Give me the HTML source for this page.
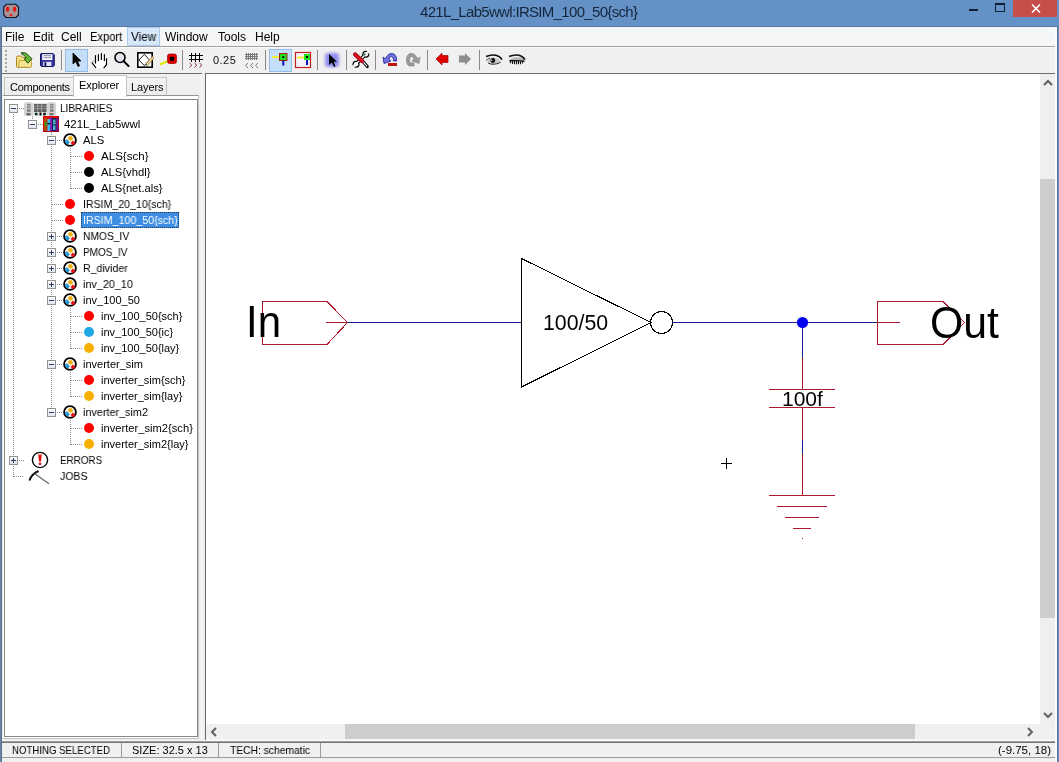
<!DOCTYPE html>
<html><head><meta charset="utf-8"><style>
*{margin:0;padding:0;box-sizing:border-box}
html,body{width:1059px;height:762px;overflow:hidden;position:relative;background:#f0f0f0;font-family:"Liberation Sans",sans-serif;}
.a{position:absolute}
.t{position:absolute;white-space:nowrap;line-height:16px;font-size:11px;color:#000;will-change:transform}
svg{position:absolute;overflow:visible}
</style></head><body>
<div class="a" style="left:0;top:0;width:1059px;height:27px;background:#6592c6;border-bottom:1px solid #5a7aa2"></div>
<div class="a" style="left:0;top:27px;width:1px;height:735px;background:#6a86a6"></div>
<div class="a" style="left:1px;top:27px;width:1px;height:735px;background:#56708e"></div>
<div class="a" style="left:1055px;top:27px;width:2px;height:735px;background:#f8fbff"></div>
<div class="a" style="left:1057px;top:27px;width:1px;height:735px;background:#56769a"></div>
<div class="a" style="left:1058px;top:27px;width:1px;height:735px;background:#6a8db5"></div>
<svg style="left:3px;top:3px" width="17" height="16" viewBox="0 0 17 16">
<path d="M3.3,1.3 H12.7 L15.5,4 V11.8 L12.7,14.5 H3.3 L0.7,11.8 V4 Z" fill="#a89494" stroke="#10101e" stroke-width="1.1" stroke-linejoin="round"/>
<ellipse cx="4.6" cy="6.2" rx="1.6" ry="2.6" fill="#ee1010"/><ellipse cx="11.6" cy="6.2" rx="1.6" ry="2.6" fill="#ee1010"/>
<path d="M6,12.8 Q8,8.8 10,12.8 Z" fill="#ee1010"/></svg>
<div class="t" style="left:420px;top:3px;font-size:15px;line-height:18px;color:#15253a;letter-spacing:-0.68px;transform:scaleY(1.03);transform-origin:0 13.5px">421L_Lab5wwl:IRSIM_100_50{sch}</div>
<div class="a" style="left:969px;top:9px;width:9px;height:2px;background:#0e1e36"></div>
<div class="a" style="left:995px;top:3px;width:10px;height:9px;border:1px solid #0e1e36;border-top-width:2px"></div>
<div class="a" style="left:1013px;top:0;width:44px;height:17px;background:#c74f4a"></div>
<svg style="left:1031px;top:4px" width="10" height="9" viewBox="0 0 10 9"><path d="M1,0.5 L9,8.5 M9,0.5 L1,8.5" stroke="#fff" stroke-width="1.6"/></svg>
<div class="a" style="left:2px;top:27px;width:1053px;height:19px;background:#f5f6f7"></div>
<div class="a" style="left:2px;top:46px;width:1053px;height:1px;background:#a0a0a0"></div>
<div class="a" style="left:127px;top:27px;width:33px;height:19px;background:#d5e7f8;border:1px solid #a8cbef"></div>
<div class="t" style="left:5.4px;top:29px;font-size:12px;line-height:16px">File</div>
<div class="t" style="left:32.5px;top:29px;font-size:12px;line-height:16px">Edit</div>
<div class="t" style="left:61.0px;top:29px;font-size:12px;line-height:16px">Cell</div>
<div class="t" style="left:90.0px;top:29px;font-size:12px;line-height:16px;transform:scaleX(0.93);transform-origin:0 0">Export</div>
<div class="t" style="left:130.5px;top:29px;font-size:12px;line-height:16px;transform:scaleX(0.97);transform-origin:0 0">View</div>
<div class="t" style="left:165.0px;top:29px;font-size:12px;line-height:16px">Window</div>
<div class="t" style="left:217.5px;top:29px;font-size:12px;line-height:16px">Tools</div>
<div class="t" style="left:254.5px;top:29px;font-size:12px;line-height:16px">Help</div>
<div class="a" style="left:2px;top:47px;width:1053px;height:26px;background:#f0f0f0"></div>
<div class="a" style="left:2px;top:47px;width:1053px;height:1px;background:#fafafa"></div>
<div class="a" style="left:2px;top:73px;width:200px;height:1px;background:#6e6e6e"></div>
<div class="a" style="left:205px;top:73px;width:850px;height:1px;background:#6e6e6e"></div>
<div class="a" style="left:5px;top:50px;width:2px;height:2px;background:#a8a8a8"></div>
<div class="a" style="left:5px;top:54px;width:2px;height:2px;background:#a8a8a8"></div>
<div class="a" style="left:5px;top:58px;width:2px;height:2px;background:#a8a8a8"></div>
<div class="a" style="left:5px;top:62px;width:2px;height:2px;background:#a8a8a8"></div>
<div class="a" style="left:5px;top:66px;width:2px;height:2px;background:#a8a8a8"></div>
<div class="a" style="left:5px;top:70px;width:2px;height:2px;background:#a8a8a8"></div>
<div class="a" style="left:61px;top:50px;width:1px;height:20px;background:#8a8a8a"></div>
<div class="a" style="left:182px;top:50px;width:1px;height:20px;background:#8a8a8a"></div>
<div class="a" style="left:265px;top:50px;width:1px;height:20px;background:#8a8a8a"></div>
<div class="a" style="left:317px;top:50px;width:1px;height:20px;background:#8a8a8a"></div>
<div class="a" style="left:346px;top:50px;width:1px;height:20px;background:#8a8a8a"></div>
<div class="a" style="left:375px;top:50px;width:1px;height:20px;background:#8a8a8a"></div>
<div class="a" style="left:427px;top:50px;width:1px;height:20px;background:#8a8a8a"></div>
<div class="a" style="left:479px;top:50px;width:1px;height:20px;background:#8a8a8a"></div>
<div class="a" style="left:65px;top:49px;width:23px;height:23px;background:#c5defa;border:1px solid #94bde8"></div>
<div class="a" style="left:269px;top:49px;width:23px;height:23px;background:#c5defa;border:1px solid #94bde8"></div>
<svg style="left:13px;top:49px" width="22" height="22" viewBox="0 0 22 22">
<path d="M3.5,8.5 Q3.5,7 5,7 H8.5 L10,8.5 H16.5 Q18,8.5 18,10 V17.5 Q18,18.5 17,18.5 H4.5 Q3.5,18.5 3.5,17.5 Z" fill="#f3dc80" stroke="#a88a2a" stroke-width="1"/>
<path d="M6.3,11.5 H17.5 Q18.5,11.5 18.5,12.5 V17.5 Q18.5,18.3 17.5,18.3 H5.5 Q6,14 6.3,11.5 Z" fill="#f7e490" stroke="#b89a30" stroke-width="0.8"/>
<path d="M8.5,3.6 Q13,3 15.5,6.3 L19,9.8 L14.8,14.2 L11.2,10 L13.3,9 Q11.8,6 8.7,5 Z" fill="#64b834" stroke="#17400e" stroke-width="0.9" stroke-linejoin="round"/>
</svg>
<svg style="left:40px;top:53px" width="15" height="14" viewBox="0 0 15 14">
<path d="M1,0.5 H13 L14.3,1.8 V12.5 L13.3,13.5 H1.5 L0.5,12.5 V1 Z" fill="#3030a0" stroke="#16165a" stroke-width="1"/>
<rect x="2.2" y="1.2" width="10.2" height="5.8" fill="#fff"/>
<rect x="3.5" y="2.4" width="7.5" height="0.8" fill="#5a5a8a"/><rect x="3.5" y="4.4" width="7.5" height="0.8" fill="#6a6a9a"/>
<rect x="3.2" y="8.8" width="8.2" height="4.2" fill="#e2e2f8"/><rect x="4.5" y="9.2" width="1.8" height="3.8" fill="#141450"/>
</svg>
<svg style="left:72px;top:52px" width="10" height="16" viewBox="0 0 10 16">
<path d="M1,1 L1,12 L3.8,9.5 L6,14.5 L7.5,13.8 L5.5,9 L9,9 Z" fill="#000" stroke="#000" stroke-width="0.8" stroke-linejoin="round"/>
</svg>
<svg style="left:88px;top:50px" width="22" height="20" viewBox="0 0 22 20">
<path d="M4,13 L7.5,11.5 V5 Q10,3.5 13.5,3.5 Q17,4 18.5,7 V14 L16,18 H8 Z" fill="#fff"/>
<path d="M7.5,5.5 V13.1 M10.4,4.5 V10.5 M13.4,3.7 V9.4 M16.4,4.7 V10.5 M18.5,8.7 V14.7 L16,17.6 M4.2,12.9 L7.7,17.5" fill="none" stroke="#000" stroke-width="1.2" stroke-linecap="round"/>
<path d="M3.3,12.3 L7,11" stroke="#999" stroke-width="0.8"/>
</svg>
<svg style="left:113px;top:51px" width="17" height="17" viewBox="0 0 17 17">
<circle cx="7" cy="6.5" r="5" fill="#e4e4ee" stroke="#000" stroke-width="1.6"/>
<path d="M10.5,10 L15.5,15" stroke="#000" stroke-width="2" stroke-linecap="round"/>
</svg>
<svg style="left:137px;top:52px" width="18" height="16" viewBox="0 0 18 16">
<rect x="0.8" y="0.8" width="14.4" height="14.4" fill="#fff" stroke="#000" stroke-width="1.6"/>
<path d="M2,8 L7.3,2.3 L12.5,8 L7.3,13.6 Z" fill="none" stroke="#000" stroke-width="0.9"/>
<path d="M9,12 L15.5,4.5 L17,6 L10.5,13.5 Z" fill="#e8cf90" stroke="#a08048" stroke-width="0.6"/>
<path d="M8.5,13.5 L9,12 L10.5,13.5 Z" fill="#333"/>
</svg>
<svg style="left:159px;top:53px" width="19" height="14" viewBox="0 0 19 14">
<path d="M1,11.5 L10,7.5" stroke="#e6e600" stroke-width="2"/>
<rect x="8.5" y="1" width="9" height="9.5" rx="2" fill="#e00000" stroke="#a00000" stroke-width="0.7"/>
<circle cx="13" cy="5.8" r="2.4" fill="#000"/>
</svg>
<svg style="left:188px;top:52px" width="16" height="17" viewBox="0 0 16 17">
<path d="M3.5,1 V10 M7.5,1 V10 M11.5,1 V10 M1,3.5 H14.5 M1,7.5 H14.5" stroke="#000" stroke-width="1" shape-rendering="crispEdges"/>
<path d="M1.5,11 L3.8,13.2 L1.5,15.4 M6.5,11 L8.8,13.2 L6.5,15.4 M11.5,11 L13.8,13.2 L11.5,15.4" fill="none" stroke="#8c2424" stroke-width="1"/>
</svg>
<div class="t" style="left:212.5px;top:52px;font-size:11px;line-height:16px;color:#111;letter-spacing:0.45px">0.25</div>
<svg style="left:244px;top:52px" width="16" height="17" viewBox="0 0 16 17">
<path d="M2.5,1 V8 M4.5,1 V8 M6.5,1 V8 M8.5,1 V8 M10.5,1 V8 M12.5,1 V8 M1,2.5 H14 M1,4.5 H14 M1,6.5 H14" stroke="#7a7a7a" stroke-width="1" shape-rendering="crispEdges"/>
<path d="M4,11 L1.5,13.5 L4,16 M9,11 L6.5,13.5 L9,16 M14,11 L11.5,13.5 L14,16" fill="none" stroke="#707070" stroke-width="0.9"/>
</svg>
<svg style="left:271px;top:52px" width="18" height="15" viewBox="0 0 18 15">
<rect x="1" y="4" width="8" height="2" fill="#f0f030"/>
<rect x="8.5" y="1.5" width="7.5" height="7" fill="#20e020" stroke="#a02010" stroke-width="1"/>
<rect x="11.3" y="4.2" width="2" height="1.8" fill="#000"/>
<rect x="11.3" y="8.5" width="2" height="5" fill="#1010c0"/>
</svg>
<svg style="left:294px;top:51px" width="18" height="18" viewBox="0 0 18 18">
<rect x="1.5" y="1.5" width="15" height="15" fill="#f4f4ff" stroke="#c02020" stroke-width="1.2"/>
<rect x="3" y="5.5" width="7" height="2" fill="#f0f030"/>
<rect x="10" y="3" width="6" height="6" fill="#20e020"/>
<rect x="12" y="5" width="2" height="2" fill="#000"/>
<rect x="12" y="9" width="2" height="5" fill="#1010c0"/>
</svg>
<div class="a" style="left:325px;top:53px;width:14px;height:14px;border-radius:3px;background:#8f8ff0;filter:blur(1.6px)"></div>
<svg style="left:323px;top:51px" width="18" height="18" viewBox="0 0 18 18">
<path d="M6,3 L6,14 L8.8,11.5 L11,16 L12.5,15.3 L10.5,10.8 L14,10.8 Z" fill="#000"/>
</svg>
<svg style="left:350px;top:49px" width="22" height="21" viewBox="0 0 22 21">
<path d="M6.5,14.5 L15,6" stroke="#000" stroke-width="3.4" stroke-linecap="round"/>
<circle cx="15.8" cy="5.3" r="3.5" fill="#000"/><circle cx="6" cy="15.2" r="3.5" fill="#000"/>
<path d="M6.5,14.5 L15,6" stroke="#fff" stroke-width="1.4"/>
<circle cx="15.8" cy="5.3" r="2.3" fill="#fff"/><circle cx="6" cy="15.2" r="2.3" fill="#fff"/>
<path d="M15.8,5.3 L19.5,1.6" stroke="#f0f0f0" stroke-width="2.6"/><path d="M6,15.2 L2.3,18.9" stroke="#f0f0f0" stroke-width="2.6"/>
<circle cx="14.6" cy="5.6" r="1" fill="#1a5a4a"/>
<path d="M12.5,12 L17.3,17.6" stroke="#000" stroke-width="3" stroke-linecap="round"/>
<path d="M13,12.6 L16.8,17" stroke="#fff" stroke-width="1.1" stroke-linecap="round"/>
<path d="M5.2,5.5 L12,12" stroke="#a00010" stroke-width="4.4" stroke-linecap="round"/>
<path d="M5.2,5.5 L12,12" stroke="#dd1020" stroke-width="2.6" stroke-linecap="round"/>
</svg>
<svg style="left:382px;top:52px" width="16" height="16" viewBox="0 0 16 16">
<path d="M4,6 Q6,1 10.5,1.5 Q15,2.5 14.5,9 L11.5,9 Q12,5 9.5,4.5 Q7.5,4.5 7,7.5 L9,9 L2,11.5 L1,5 L3,6.5 Z" fill="#7070e0" stroke="#1c1c96" stroke-width="0.8"/>
<rect x="6" y="11" width="9" height="3" fill="#c01010"/>
</svg>
<svg style="left:405px;top:52px" width="16" height="16" viewBox="0 0 16 16">
<path d="M12,6 Q10,1 5.5,1.5 Q1,2.5 1.5,9 Q2,14.5 6,14 L9,14 L9,11 L6,11 Q4.5,11 4.5,8 Q4.5,4.5 6.5,4.5 Q8.5,4.5 9,7.5 L7,9 L14,11.5 L15,5 L13,6.5 Z" fill="#9a9a9a" stroke="#8a8a8a" stroke-width="0.8"/>
</svg>
<svg style="left:435px;top:52px" width="14" height="14" viewBox="0 0 14 14">
<path d="M1,7 L7,1 V3.5 H13 V10.5 H7 V13 Z" fill="#e00000" stroke="#a00000" stroke-width="0.7"/>
</svg>
<svg style="left:458px;top:52px" width="14" height="14" viewBox="0 0 14 14">
<path d="M13,7 L7,1 V3.5 H1 V10.5 H7 V13 Z" fill="#8e8e8e"/>
</svg>
<svg style="left:483px;top:51px" width="22" height="16" viewBox="0 0 22 16">
<path d="M3.5,9 Q7,5.8 12,6.6 Q16,7.5 18,10.5 Q13,14 7.5,13.5 Q4.5,12.3 3.5,9 Z" fill="#c8c8c8"/>
<path d="M5,12 Q10,14.8 17.5,11.5" fill="none" stroke="#333" stroke-width="1"/>
<path d="M3.2,9.2 Q5,7.5 7,7" fill="none" stroke="#444" stroke-width="0.9"/>
<circle cx="9.8" cy="9.5" r="2.4" fill="#0a0a0a"/><circle cx="8.6" cy="9.3" r="0.7" fill="#fff"/>
<path d="M3,5.6 Q8,3.3 13,4.3 Q17,5.2 19,8.6" fill="none" stroke="#111" stroke-width="1.6"/>
</svg>
<svg style="left:506px;top:51px" width="22" height="16" viewBox="0 0 22 16">
<path d="M3.5,8.5 Q9,5.2 17,7 L18.5,10 Q11,9.6 3.5,9.8 Z" fill="#b4b4b4"/>
<path d="M3.5,9.8 Q11,9.3 18.5,10.2" fill="none" stroke="#111" stroke-width="1.4"/>
<path d="M4.5,10 v2.3 M6.5,10 v3 M8.5,10 v3.2 M10.5,10 v3.2 M12.5,10 v3.2 M14.5,10.2 v3 M16.5,10.3 v2.3" stroke="#111" stroke-width="1.1"/>
<path d="M3,5.6 Q8,3.3 13,4.3 Q17,5.2 19,8.6" fill="none" stroke="#111" stroke-width="1.6"/>
</svg>
<div class="a" style="left:4px;top:77px;width:70px;height:18px;background:linear-gradient(#f4f4f4,#ececec);border:1px solid #c4c4c4;border-bottom:none"></div>
<div class="a" style="left:126px;top:77px;width:41px;height:18px;background:linear-gradient(#f4f4f4,#ececec);border:1px solid #c4c4c4;border-bottom:none"></div>
<div class="a" style="left:3px;top:95px;width:196px;height:644px;border:1px solid #c4c4c4;border-top-color:#959595;border-left:none;background:#fff"></div>
<div class="a" style="left:73px;top:75px;width:54px;height:22px;background:#fff;border:1px solid #c4c4c4;border-bottom:none"></div>
<div class="t" style="left:10px;top:79px;font-size:11px;line-height:16px;letter-spacing:-0.25px">Components</div>
<div class="t" style="left:79px;top:77px;font-size:11px;line-height:16px;letter-spacing:-0.1px">Explorer</div>
<div class="t" style="left:131px;top:79px;font-size:11px;line-height:16px;letter-spacing:-0.1px">Layers</div>
<div class="a" style="left:4px;top:99px;width:194px;height:638px;border:1px solid #888;background:#fff"></div>
<div class="a" style="left:13px;top:112px;width:1px;height:365px;background:repeating-linear-gradient(180deg,#8a8a8a 0 1px,transparent 1px 2px)"></div>
<div class="a" style="left:32px;top:116px;width:1px;height:4px;background:repeating-linear-gradient(180deg,#8a8a8a 0 1px,transparent 1px 2px)"></div>
<div class="a" style="left:51px;top:132px;width:1px;height:281px;background:repeating-linear-gradient(180deg,#8a8a8a 0 1px,transparent 1px 2px)"></div>
<div class="a" style="left:70px;top:148px;width:1px;height:41px;background:repeating-linear-gradient(180deg,#8a8a8a 0 1px,transparent 1px 2px)"></div>
<div class="a" style="left:70px;top:308px;width:1px;height:41px;background:repeating-linear-gradient(180deg,#8a8a8a 0 1px,transparent 1px 2px)"></div>
<div class="a" style="left:70px;top:372px;width:1px;height:25px;background:repeating-linear-gradient(180deg,#8a8a8a 0 1px,transparent 1px 2px)"></div>
<div class="a" style="left:70px;top:420px;width:1px;height:25px;background:repeating-linear-gradient(180deg,#8a8a8a 0 1px,transparent 1px 2px)"></div>
<div class="a" style="left:9px;top:104px;width:9px;height:9px;border:1px solid #919191;background:linear-gradient(#fff,#e0e4ee)"></div>
<div class="a" style="left:11px;top:108px;width:5px;height:1px;background:#2c3c5c"></div>
<div class="a" style="left:19px;top:108px;width:5px;height:1px;background:repeating-linear-gradient(90deg,#8a8a8a 0 1px,transparent 1px 2px)"></div>
<svg style="left:24px;top:100px" width="32" height="16" viewBox="0 0 32 16">
<path d="M0,3.5 Q4.5,0 9,3.5 V15.5 H0 Z" fill="#d4d4d4"/>
<path d="M23,3.5 Q27.5,0 32,3.5 V15.5 H23 Z" fill="#d4d4d4"/>
<rect x="9" y="3" width="14" height="12.5" fill="#e2e2e2"/>
<rect x="3" y="4" width="3.5" height="8" fill="#8a8a8a"/><rect x="26" y="4" width="3.5" height="8" fill="#8a8a8a"/>
<path d="M3,6 H6.5 M3,8.5 H6.5 M26,6 H29.5 M26,8.5 H29.5" stroke="#d4d4d4" stroke-width="0.7"/>
<rect x="10" y="4" width="12.5" height="8" fill="#5a5a5a"/>
<path d="M10,6.2 H22.5 M10,8.8 H22.5 M13.8,4 V12 M17.6,4 V12" stroke="#b0b0b0" stroke-width="0.8"/>
<rect x="2.5" y="13" width="4" height="2.5" fill="#666"/><rect x="25.5" y="13" width="4" height="2.5" fill="#777"/>
<circle cx="12.2" cy="14" r="1.5" fill="#103030"/><rect x="15.5" y="12.5" width="2" height="3" fill="#000"/><circle cx="20.5" cy="14" r="1.5" fill="#111"/>
</svg>
<div class="t" style="left:60px;top:100px;transform:scaleX(0.9100);transform-origin:0 0">LIBRARIES</div>
<div class="a" style="left:28px;top:120px;width:9px;height:9px;border:1px solid #919191;background:linear-gradient(#fff,#e0e4ee)"></div>
<div class="a" style="left:30px;top:124px;width:5px;height:1px;background:#2c3c5c"></div>
<div class="a" style="left:38px;top:124px;width:5px;height:1px;background:repeating-linear-gradient(90deg,#8a8a8a 0 1px,transparent 1px 2px)"></div>
<svg style="left:43px;top:116px" width="16" height="16" viewBox="0 0 16 16">
<rect x="0" y="0" width="16" height="16" fill="#e00808"/>
<rect x="15" y="0" width="1" height="16" fill="#a00030"/><rect x="0" y="15" width="16" height="1" fill="#b00020"/>
<rect x="1" y="2" width="3.5" height="13" fill="#b04808"/><rect x="1.5" y="6.5" width="2.5" height="3" fill="#30a020"/>
<rect x="4.5" y="3" width="2.5" height="12" fill="#40c0f0"/><rect x="4.5" y="7" width="2.5" height="1.3" fill="#000"/>
<rect x="7" y="1.5" width="2" height="13.5" fill="#8020b0"/>
<rect x="9" y="2" width="4.5" height="13" fill="#101a60"/><rect x="10" y="3.5" width="2.5" height="5" fill="#50b0b8"/><rect x="10" y="9.5" width="2.5" height="4.5" fill="#50b0c8"/>
<rect x="13.5" y="2" width="1.5" height="13" fill="#6020a0"/>
</svg>
<div class="t" style="left:63.6px;top:116px;transform:scaleX(1.0410);transform-origin:0 0">421L_Lab5wwl</div>
<div class="a" style="left:47px;top:136px;width:9px;height:9px;border:1px solid #919191;background:linear-gradient(#fff,#e0e4ee)"></div>
<div class="a" style="left:49px;top:140px;width:5px;height:1px;background:#2c3c5c"></div>
<div class="a" style="left:57px;top:140px;width:6px;height:1px;background:repeating-linear-gradient(90deg,#8a8a8a 0 1px,transparent 1px 2px)"></div>
<svg style="left:63px;top:133px" width="14" height="14" viewBox="0 0 14 14">
<circle cx="7" cy="7" r="5.9" fill="#fff" stroke="#000" stroke-width="1.9"/>
<path d="M7.5,2.3 L10.6,5.2 L7.5,8.3 L4.4,5.2 Z" fill="#f2b21a"/>
<path d="M4,6.3 L7,9.3 L4.6,11.8 L1.8,9 Q1.8,7.6 2.6,7 Z" fill="#2a9ad2"/>
<path d="M9.7,7.6 L12.3,9.4 Q11.5,11.4 9.9,12.2 L7.6,9.9 Z" fill="#e81414"/>
</svg>
<div class="t" style="left:82.6px;top:132px;transform:scaleX(1.0192);transform-origin:0 0">ALS</div>
<div class="a" style="left:71px;top:156px;width:12px;height:1px;background:repeating-linear-gradient(90deg,#8a8a8a 0 1px,transparent 1px 2px)"></div>
<div class="a" style="left:84px;top:151px;width:10px;height:10px;border-radius:50%;background:#f00"></div>
<div class="t" style="left:101.3px;top:148px;transform:scaleX(1.0515);transform-origin:0 0">ALS{sch}</div>
<div class="a" style="left:71px;top:172px;width:12px;height:1px;background:repeating-linear-gradient(90deg,#8a8a8a 0 1px,transparent 1px 2px)"></div>
<div class="a" style="left:84px;top:167px;width:10px;height:10px;border-radius:50%;background:#000"></div>
<div class="t" style="left:101.3px;top:164px;transform:scaleX(1.0242);transform-origin:0 0">ALS{vhdl}</div>
<div class="a" style="left:71px;top:188px;width:12px;height:1px;background:repeating-linear-gradient(90deg,#8a8a8a 0 1px,transparent 1px 2px)"></div>
<div class="a" style="left:84px;top:183px;width:10px;height:10px;border-radius:50%;background:#000"></div>
<div class="t" style="left:101.3px;top:180px;transform:scaleX(1.0172);transform-origin:0 0">ALS{net.als}</div>
<div class="a" style="left:52px;top:204px;width:12px;height:1px;background:repeating-linear-gradient(90deg,#8a8a8a 0 1px,transparent 1px 2px)"></div>
<div class="a" style="left:65px;top:199px;width:10px;height:10px;border-radius:50%;background:#f00"></div>
<div class="t" style="left:82.6px;top:196px;transform:scaleX(0.9615);transform-origin:0 0">IRSIM_20_10{sch}</div>
<div class="a" style="left:52px;top:220px;width:12px;height:1px;background:repeating-linear-gradient(90deg,#8a8a8a 0 1px,transparent 1px 2px)"></div>
<div class="a" style="left:65px;top:215px;width:10px;height:10px;border-radius:50%;background:#f00"></div>
<div class="a" style="left:81px;top:212px;width:98px;height:16px;background:#3d8ee3;outline:1px dotted #1a3a6a;outline-offset:-1px"></div>
<div class="t" style="left:82.6px;top:212px;transform:scaleX(0.9687);transform-origin:0 0;color:#fff">IRSIM_100_50{sch}</div>
<div class="a" style="left:47px;top:232px;width:9px;height:9px;border:1px solid #919191;background:linear-gradient(#fff,#e0e4ee)"></div>
<div class="a" style="left:49px;top:236px;width:5px;height:1px;background:#2c3c5c"></div>
<div class="a" style="left:51px;top:234px;width:1px;height:5px;background:#2c3c5c"></div>
<div class="a" style="left:57px;top:236px;width:6px;height:1px;background:repeating-linear-gradient(90deg,#8a8a8a 0 1px,transparent 1px 2px)"></div>
<svg style="left:63px;top:229px" width="14" height="14" viewBox="0 0 14 14">
<circle cx="7" cy="7" r="5.9" fill="#fff" stroke="#000" stroke-width="1.9"/>
<path d="M7.5,2.3 L10.6,5.2 L7.5,8.3 L4.4,5.2 Z" fill="#f2b21a"/>
<path d="M4,6.3 L7,9.3 L4.6,11.8 L1.8,9 Q1.8,7.6 2.6,7 Z" fill="#2a9ad2"/>
<path d="M9.7,7.6 L12.3,9.4 Q11.5,11.4 9.9,12.2 L7.6,9.9 Z" fill="#e81414"/>
</svg>
<div class="t" style="left:82.6px;top:228px;transform:scaleX(0.9330);transform-origin:0 0">NMOS_IV</div>
<div class="a" style="left:47px;top:248px;width:9px;height:9px;border:1px solid #919191;background:linear-gradient(#fff,#e0e4ee)"></div>
<div class="a" style="left:49px;top:252px;width:5px;height:1px;background:#2c3c5c"></div>
<div class="a" style="left:51px;top:250px;width:1px;height:5px;background:#2c3c5c"></div>
<div class="a" style="left:57px;top:252px;width:6px;height:1px;background:repeating-linear-gradient(90deg,#8a8a8a 0 1px,transparent 1px 2px)"></div>
<svg style="left:63px;top:245px" width="14" height="14" viewBox="0 0 14 14">
<circle cx="7" cy="7" r="5.9" fill="#fff" stroke="#000" stroke-width="1.9"/>
<path d="M7.5,2.3 L10.6,5.2 L7.5,8.3 L4.4,5.2 Z" fill="#f2b21a"/>
<path d="M4,6.3 L7,9.3 L4.6,11.8 L1.8,9 Q1.8,7.6 2.6,7 Z" fill="#2a9ad2"/>
<path d="M9.7,7.6 L12.3,9.4 Q11.5,11.4 9.9,12.2 L7.6,9.9 Z" fill="#e81414"/>
</svg>
<div class="t" style="left:82.6px;top:244px;transform:scaleX(0.9098);transform-origin:0 0">PMOS_IV</div>
<div class="a" style="left:47px;top:264px;width:9px;height:9px;border:1px solid #919191;background:linear-gradient(#fff,#e0e4ee)"></div>
<div class="a" style="left:49px;top:268px;width:5px;height:1px;background:#2c3c5c"></div>
<div class="a" style="left:51px;top:266px;width:1px;height:5px;background:#2c3c5c"></div>
<div class="a" style="left:57px;top:268px;width:6px;height:1px;background:repeating-linear-gradient(90deg,#8a8a8a 0 1px,transparent 1px 2px)"></div>
<svg style="left:63px;top:261px" width="14" height="14" viewBox="0 0 14 14">
<circle cx="7" cy="7" r="5.9" fill="#fff" stroke="#000" stroke-width="1.9"/>
<path d="M7.5,2.3 L10.6,5.2 L7.5,8.3 L4.4,5.2 Z" fill="#f2b21a"/>
<path d="M4,6.3 L7,9.3 L4.6,11.8 L1.8,9 Q1.8,7.6 2.6,7 Z" fill="#2a9ad2"/>
<path d="M9.7,7.6 L12.3,9.4 Q11.5,11.4 9.9,12.2 L7.6,9.9 Z" fill="#e81414"/>
</svg>
<div class="t" style="left:82.6px;top:260px;transform:scaleX(0.9641);transform-origin:0 0">R_divider</div>
<div class="a" style="left:47px;top:280px;width:9px;height:9px;border:1px solid #919191;background:linear-gradient(#fff,#e0e4ee)"></div>
<div class="a" style="left:49px;top:284px;width:5px;height:1px;background:#2c3c5c"></div>
<div class="a" style="left:51px;top:282px;width:1px;height:5px;background:#2c3c5c"></div>
<div class="a" style="left:57px;top:284px;width:6px;height:1px;background:repeating-linear-gradient(90deg,#8a8a8a 0 1px,transparent 1px 2px)"></div>
<svg style="left:63px;top:277px" width="14" height="14" viewBox="0 0 14 14">
<circle cx="7" cy="7" r="5.9" fill="#fff" stroke="#000" stroke-width="1.9"/>
<path d="M7.5,2.3 L10.6,5.2 L7.5,8.3 L4.4,5.2 Z" fill="#f2b21a"/>
<path d="M4,6.3 L7,9.3 L4.6,11.8 L1.8,9 Q1.8,7.6 2.6,7 Z" fill="#2a9ad2"/>
<path d="M9.7,7.6 L12.3,9.4 Q11.5,11.4 9.9,12.2 L7.6,9.9 Z" fill="#e81414"/>
</svg>
<div class="t" style="left:82.6px;top:276px;transform:scaleX(0.9827);transform-origin:0 0">inv_20_10</div>
<div class="a" style="left:47px;top:296px;width:9px;height:9px;border:1px solid #919191;background:linear-gradient(#fff,#e0e4ee)"></div>
<div class="a" style="left:49px;top:300px;width:5px;height:1px;background:#2c3c5c"></div>
<div class="a" style="left:57px;top:300px;width:6px;height:1px;background:repeating-linear-gradient(90deg,#8a8a8a 0 1px,transparent 1px 2px)"></div>
<svg style="left:63px;top:293px" width="14" height="14" viewBox="0 0 14 14">
<circle cx="7" cy="7" r="5.9" fill="#fff" stroke="#000" stroke-width="1.9"/>
<path d="M7.5,2.3 L10.6,5.2 L7.5,8.3 L4.4,5.2 Z" fill="#f2b21a"/>
<path d="M4,6.3 L7,9.3 L4.6,11.8 L1.8,9 Q1.8,7.6 2.6,7 Z" fill="#2a9ad2"/>
<path d="M9.7,7.6 L12.3,9.4 Q11.5,11.4 9.9,12.2 L7.6,9.9 Z" fill="#e81414"/>
</svg>
<div class="t" style="left:82.6px;top:292px">inv_100_50</div>
<div class="a" style="left:71px;top:316px;width:12px;height:1px;background:repeating-linear-gradient(90deg,#8a8a8a 0 1px,transparent 1px 2px)"></div>
<div class="a" style="left:84px;top:311px;width:10px;height:10px;border-radius:50%;background:#f00"></div>
<div class="t" style="left:101.3px;top:308px">inv_100_50{sch}</div>
<div class="a" style="left:71px;top:332px;width:12px;height:1px;background:repeating-linear-gradient(90deg,#8a8a8a 0 1px,transparent 1px 2px)"></div>
<div class="a" style="left:84px;top:327px;width:10px;height:10px;border-radius:50%;background:#1ea8e8"></div>
<div class="t" style="left:101.3px;top:324px">inv_100_50{ic}</div>
<div class="a" style="left:71px;top:348px;width:12px;height:1px;background:repeating-linear-gradient(90deg,#8a8a8a 0 1px,transparent 1px 2px)"></div>
<div class="a" style="left:84px;top:343px;width:10px;height:10px;border-radius:50%;background:#f8b000"></div>
<div class="t" style="left:101.3px;top:340px">inv_100_50{lay}</div>
<div class="a" style="left:47px;top:360px;width:9px;height:9px;border:1px solid #919191;background:linear-gradient(#fff,#e0e4ee)"></div>
<div class="a" style="left:49px;top:364px;width:5px;height:1px;background:#2c3c5c"></div>
<div class="a" style="left:57px;top:364px;width:6px;height:1px;background:repeating-linear-gradient(90deg,#8a8a8a 0 1px,transparent 1px 2px)"></div>
<svg style="left:63px;top:357px" width="14" height="14" viewBox="0 0 14 14">
<circle cx="7" cy="7" r="5.9" fill="#fff" stroke="#000" stroke-width="1.9"/>
<path d="M7.5,2.3 L10.6,5.2 L7.5,8.3 L4.4,5.2 Z" fill="#f2b21a"/>
<path d="M4,6.3 L7,9.3 L4.6,11.8 L1.8,9 Q1.8,7.6 2.6,7 Z" fill="#2a9ad2"/>
<path d="M9.7,7.6 L12.3,9.4 Q11.5,11.4 9.9,12.2 L7.6,9.9 Z" fill="#e81414"/>
</svg>
<div class="t" style="left:82.6px;top:356px">inverter_sim</div>
<div class="a" style="left:71px;top:380px;width:12px;height:1px;background:repeating-linear-gradient(90deg,#8a8a8a 0 1px,transparent 1px 2px)"></div>
<div class="a" style="left:84px;top:375px;width:10px;height:10px;border-radius:50%;background:#f00"></div>
<div class="t" style="left:101.3px;top:372px">inverter_sim{sch}</div>
<div class="a" style="left:71px;top:396px;width:12px;height:1px;background:repeating-linear-gradient(90deg,#8a8a8a 0 1px,transparent 1px 2px)"></div>
<div class="a" style="left:84px;top:391px;width:10px;height:10px;border-radius:50%;background:#f8b000"></div>
<div class="t" style="left:101.3px;top:388px">inverter_sim{lay}</div>
<div class="a" style="left:47px;top:408px;width:9px;height:9px;border:1px solid #919191;background:linear-gradient(#fff,#e0e4ee)"></div>
<div class="a" style="left:49px;top:412px;width:5px;height:1px;background:#2c3c5c"></div>
<div class="a" style="left:57px;top:412px;width:6px;height:1px;background:repeating-linear-gradient(90deg,#8a8a8a 0 1px,transparent 1px 2px)"></div>
<svg style="left:63px;top:405px" width="14" height="14" viewBox="0 0 14 14">
<circle cx="7" cy="7" r="5.9" fill="#fff" stroke="#000" stroke-width="1.9"/>
<path d="M7.5,2.3 L10.6,5.2 L7.5,8.3 L4.4,5.2 Z" fill="#f2b21a"/>
<path d="M4,6.3 L7,9.3 L4.6,11.8 L1.8,9 Q1.8,7.6 2.6,7 Z" fill="#2a9ad2"/>
<path d="M9.7,7.6 L12.3,9.4 Q11.5,11.4 9.9,12.2 L7.6,9.9 Z" fill="#e81414"/>
</svg>
<div class="t" style="left:82.6px;top:404px;transform:scaleX(0.9829);transform-origin:0 0">inverter_sim2</div>
<div class="a" style="left:71px;top:428px;width:12px;height:1px;background:repeating-linear-gradient(90deg,#8a8a8a 0 1px,transparent 1px 2px)"></div>
<div class="a" style="left:84px;top:423px;width:10px;height:10px;border-radius:50%;background:#f00"></div>
<div class="t" style="left:101.3px;top:420px;transform:scaleX(1.0155);transform-origin:0 0">inverter_sim2{sch}</div>
<div class="a" style="left:71px;top:444px;width:12px;height:1px;background:repeating-linear-gradient(90deg,#8a8a8a 0 1px,transparent 1px 2px)"></div>
<div class="a" style="left:84px;top:439px;width:10px;height:10px;border-radius:50%;background:#f8b000"></div>
<div class="t" style="left:101.3px;top:436px">inverter_sim2{lay}</div>
<div class="a" style="left:9px;top:456px;width:9px;height:9px;border:1px solid #919191;background:linear-gradient(#fff,#e0e4ee)"></div>
<div class="a" style="left:11px;top:460px;width:5px;height:1px;background:#2c3c5c"></div>
<div class="a" style="left:13px;top:458px;width:1px;height:5px;background:#2c3c5c"></div>
<div class="a" style="left:19px;top:460px;width:5px;height:1px;background:repeating-linear-gradient(90deg,#8a8a8a 0 1px,transparent 1px 2px)"></div>
<svg style="left:31px;top:451px" width="18" height="18" viewBox="0 0 18 18">
<circle cx="9" cy="9" r="7.6" fill="#fff" stroke="#000" stroke-width="1.4"/>
<path d="M7.2,3.4 H10.8 L10,10.6 H8 Z" fill="#e01010"/><rect x="7.8" y="11.6" width="2.4" height="2.4" fill="#e01010"/>
</svg>
<div class="t" style="left:60px;top:452px;transform:scaleX(0.8946);transform-origin:0 0">ERRORS</div>
<div class="a" style="left:14px;top:476px;width:10px;height:1px;background:repeating-linear-gradient(90deg,#8a8a8a 0 1px,transparent 1px 2px)"></div>
<svg style="left:28px;top:468px" width="22" height="18" viewBox="0 0 22 18">
<path d="M1.5,12.5 Q3,6.5 10.5,3" fill="none" stroke="#111" stroke-width="2"/>
<path d="M6.5,5.5 L21,15.8" stroke="#666" stroke-width="1.3"/>
</svg>
<div class="t" style="left:60px;top:468px;transform:scaleX(0.9572);transform-origin:0 0">JOBS</div>
<div class="a" style="left:205px;top:73px;width:1px;height:667px;background:#6a6a6a"></div>
<div class="a" style="left:201px;top:74px;width:1px;height:666px;background:#fafafa"></div>
<div class="a" style="left:206px;top:74px;width:834px;height:650px;background:#fff"></div>
<div class="a" style="left:1040px;top:74px;width:15px;height:650px;background:#efefef"></div>
<div class="a" style="left:1040px;top:179px;width:15px;height:439px;background:#cdcdcd"></div>
<svg style="left:1043px;top:79px" width="10" height="8" viewBox="0 0 10 8"><path d="M1,6 L5,2 L9,6" fill="none" stroke="#606060" stroke-width="2"/></svg>
<svg style="left:1043px;top:711px" width="10" height="8" viewBox="0 0 10 8"><path d="M1,2 L5,6 L9,2" fill="none" stroke="#606060" stroke-width="2"/></svg>
<div class="a" style="left:206px;top:724px;width:849px;height:17px;background:#f0f0f0"></div>
<div class="a" style="left:345px;top:724px;width:570px;height:15px;background:#cdcdcd"></div>
<svg style="left:210px;top:727px" width="8" height="10" viewBox="0 0 8 10"><path d="M6,1 L2,5 L6,9" fill="none" stroke="#606060" stroke-width="2"/></svg>
<svg style="left:1026px;top:727px" width="8" height="10" viewBox="0 0 8 10"><path d="M2,1 L6,5 L2,9" fill="none" stroke="#606060" stroke-width="2"/></svg>
<svg style="left:0;top:0" width="1059" height="762" viewBox="0 0 1059 762">
<g fill="none" stroke-width="1" shape-rendering="crispEdges">
<path d="M347.5,322.5 H521.5 M672.5,322.5 H877.5 M802.5,322.5 V357.5" stroke="#1c1c96"/>
<path d="M802.5,439.5 V453.5" stroke="#1c1c96"/>
</g>
<g fill="none" stroke="#a81c2c" stroke-width="1" shape-rendering="crispEdges">
<path d="M262.5,301.5 H327 L347.5,322.5 L327,344.5 H262.5 Z"/>
<path d="M326,322.5 H347.5"/>
<path d="M877.5,301.5 H943 L964.5,322.5 L943,344.5 H877.5 Z"/>
<path d="M877.5,322.5 H899.5"/>
<path d="M802.5,357.5 V389.5 M802.5,407.5 V439.5 M802.5,453.5 V495.5" shape-rendering="crispEdges"/>
<path d="M769,389.5 H835 M769,407.5 H835 M769,495.5 H835 M777,506.5 H827 M785,517.5 H819 M793,528.5 H811" shape-rendering="crispEdges"/>
<path d="M802,538.5 H803" shape-rendering="crispEdges"/>
</g>
<g fill="none" stroke="#000" stroke-width="1" shape-rendering="crispEdges">
<path d="M521.5,258.5 V387 L651,322.5 Z"/>
<circle cx="661.5" cy="322.5" r="11"/>
<path d="M721,463.5 H732 M726.5,458 V469" shape-rendering="crispEdges"/>
</g>
<circle cx="802.5" cy="322.5" r="5.6" fill="#0000f0"/>
</svg>
<div class="t" style="left:245.5px;top:297px;font-size:42px;line-height:52px;transform:scaleY(1.05);transform-origin:0 40px">In</div>
<div class="t" style="left:930px;top:296.5px;font-size:42.8px;line-height:52px;transform:scaleY(1.05);transform-origin:0 40px">Out</div>
<div class="t" style="left:543px;top:310.5px;font-size:21.3px;line-height:24px">100/50</div>
<div class="t" style="left:782px;top:386.5px;font-size:21px;line-height:24px">100f</div>
<div class="a" style="left:206px;top:739px;width:849px;height:2px;background:#f8f8f8"></div>
<div class="a" style="left:2px;top:741px;width:1053px;height:1px;background:#a0a0a0"></div>
<div class="a" style="left:2px;top:742px;width:1053px;height:1px;background:#737373"></div>
<div class="a" style="left:2px;top:743px;width:1053px;height:14px;background:#f0f0f0"></div>
<div class="a" style="left:2px;top:757px;width:1053px;height:1px;background:#9a9a9a"></div>
<div class="a" style="left:121px;top:743px;width:1px;height:14px;background:#9a9a9a"></div>
<div class="a" style="left:218px;top:743px;width:1px;height:14px;background:#9a9a9a"></div>
<div class="a" style="left:320px;top:743px;width:1px;height:14px;background:#9a9a9a"></div>
<div class="t" style="left:12px;top:742px;transform:scaleX(0.8761);transform-origin:0 0">NOTHING SELECTED</div>
<div class="t" style="left:132.4px;top:742px">SIZE: 32.5 x 13</div>
<div class="t" style="left:229.5px;top:742px;transform:scaleX(0.9348);transform-origin:0 0">TECH: schematic</div>
<div class="t" style="left:998px;top:742px;transform:scaleX(1.0443);transform-origin:0 0">(-9.75, 18)</div>
</body></html>
